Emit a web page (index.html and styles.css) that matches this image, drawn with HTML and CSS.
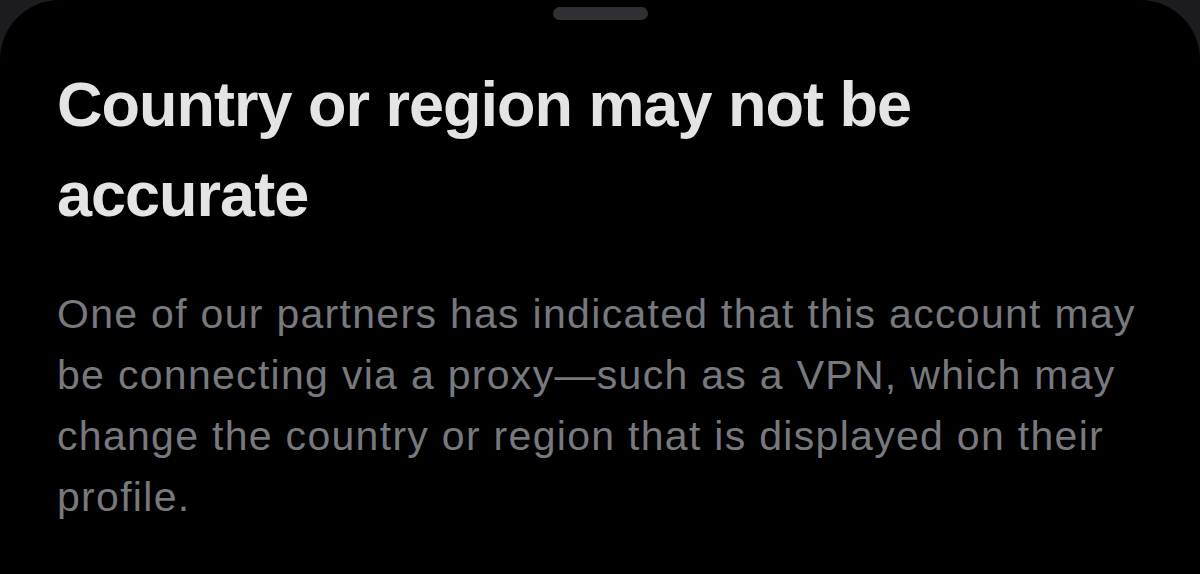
FILE: index.html
```html
<!DOCTYPE html>
<html lang="en">
<head>
<meta charset="utf-8">
<title>Country or region may not be accurate</title>
<link rel="stylesheet" href="styles.css">
</head>
<body>
<div class="sheet">
  <div class="handle-row"><div class="handle"></div></div>
  <div class="content">
    <h1 class="title">Country or region may not be accurate</h1>
    <p class="desc">One of our partners has indicated that this account may be connecting via a proxy—such as a VPN, which may change the country or region that is displayed on their profile.</p>
  </div>
</div>
</body>
</html>
```

FILE: styles.css
```css
html, body {
  margin: 0;
  padding: 0;
  height: 100%;
  background: #1c1c1f;
  overflow: hidden;
}
.sheet {
  background: #000;
  min-height: 100%;
  border-radius: 60px 60px 0 0;
  display: flex;
  flex-direction: column;
}
.handle-row {
  display: flex;
  justify-content: center;
  padding-top: 7px;
}
.handle {
  width: 95px;
  height: 13px;
  border-radius: 7px;
  background: #2f3033;
}
.content {
  padding: 39px 0 0 57px;
  width: 1100px;
}
.title {
  margin: 0;
  font-family: "Liberation Sans", Arial, sans-serif;
  font-weight: 700;
  font-size: 63px;
  line-height: 90px;
  letter-spacing: -1px;
  color: #e4e4e4;
  width: 900px;
}
.desc {
  margin: 45px 0 0 0;
  font-family: "Liberation Sans", Arial, sans-serif;
  font-size: 41px;
  line-height: 61px;
  letter-spacing: 1.3px;
  color: #77797e;
  width: 1100px;
}
```
